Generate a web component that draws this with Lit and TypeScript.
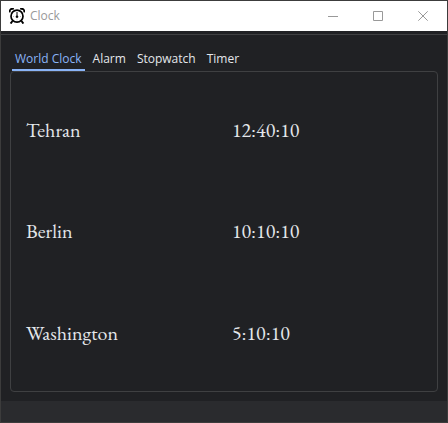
import { LitElement, html, css, svg } from "lit";
import { customElement, state } from "lit/decorators.js";

const TABS = ["World Clock", "Alarm", "Stopwatch", "Timer"];

const CLOCKS = [
  { city: "Tehran", time: "12:40:10" },
  { city: "Berlin", time: "10:10:10" },
  { city: "Washington", time: "5:10:10" },
];

const WINDOW_ACTIONS = [
  { name: "Minimize", shape: svg`<path d="M0 5.5H10" />` },
  { name: "Maximize", shape: svg`<path d="M.5 .5H9.5V9.5H.5Z" />` },
  { name: "Close", shape: svg`<path d="M.3 .3L9.7 9.7M9.7 .3L.3 9.7" />` },
];

@customElement("title-bar")
class TitleBar extends LitElement {
  static styles = css`
    :host {
      display: flex;
      align-items: center;
      height: 30px;
      padding-left: 8px;
      background: #ffffff;
      color: #999999;
      font: 12px/16px "Open Sans", "Noto Sans", sans-serif;
    }
    .logo {
      width: 16px;
      height: 16px;
      margin-right: 5px;
      fill: none;
      stroke: #000000;
    }
    .title {
      flex: 1;
    }
    .action {
      display: flex;
      align-items: center;
      justify-content: center;
      width: 45px;
      height: 30px;
      padding: 0;
      border: 0;
      background: none;
    }
    .actions {
      display: flex;
      margin-right: 2px;
    }
    .glyph {
      width: 10px;
      height: 10px;
      fill: none;
      stroke: #999999;
    }
  `;

  render() {
    return html`
      <svg class="logo" viewBox="0 0 16 16" aria-hidden="true">
        <circle cx="8" cy="8.2" r="6" stroke-width="1.7" />
        <path d="M.8 4.4C.3 1.8 2 .2 4.8 .9M15.2 4.4C15.7 1.8 14 .2 11.2 .9" stroke-width="1.8" />
        <path d="M3.5 13L1.6 15.6M12.5 13L14.4 15.6" stroke-width="1.9" />
        <path d="M8 4V8.6" stroke-width="1" />
        <circle cx="8" cy="8.8" r="1" fill="#000000" stroke-width=".6" />
        <path d="M4.3 8.5H5M11 8.5H11.7M8 11.6V12.2" stroke-width=".7" stroke="#777777" />
      </svg>
      <span class="title">Clock</span>
      <div class="actions">
        ${WINDOW_ACTIONS.map(
          (a) => html`<button class="action" aria-label=${a.name}>
            <svg class="glyph" viewBox="0 0 10 10">${a.shape}</svg>
          </button>`
        )}
      </div>
    `;
  }
}

@customElement("app-root")
class AppRoot extends LitElement {
  @state() private active = 0;

  static styles = css`
    :host {
      display: flex;
      flex-direction: column;
      box-sizing: border-box;
      min-height: 100vh;
      border: 1px solid #3c3c3c;
      background: #202124;
      color: #e4e7eb;
      font: 12px/16px "Open Sans", "Noto Sans", sans-serif;
    }
    .rule {
      height: 1px;
      margin-top: 3px;
      background: #3f4042;
    }
    .content {
      flex: 1;
      display: flex;
      flex-direction: column;
      padding: 13px 9px 9px;
    }
    .tabs {
      display: flex;
      padding-left: 2px;
    }
    .tab {
      height: 23px;
      padding: 1px 3px 0;
      margin-right: 5px;
      border: 0;
      border-bottom: 2px solid transparent;
      background: none;
      color: inherit;
      font: inherit;
      white-space: nowrap;
    }
    .tab.active {
      border-color: #8ab4f7;
      color: #8ab4f7;
    }
    .panel {
      flex: 1;
      display: flex;
      padding: 7px 15px;
      border: 1px solid #3f4042;
      border-radius: 4px;
    }
    .clocks {
      flex: 1;
      table-layout: fixed;
      border-collapse: collapse;
      font: 20px/24px "EB Garamond", "Liberation Serif", serif;
    }
    .city {
      width: 52%;
      padding: 0;
      font-weight: 400;
      text-align: left;
    }
    .time {
      padding: 0;
    }
    .status {
      height: 21px;
      background: #2a2b2e;
    }
  `;

  render() {
    return html`
      <title-bar></title-bar>
      <div class="rule"></div>
      <main class="content">
        <div class="tabs" role="tablist">
          ${TABS.map(
            (name, i) => html`<button
              class="tab ${i === this.active ? "active" : ""}"
              role="tab"
              aria-selected=${i === this.active}
              @click=${() => (this.active = i)}
            >${name}</button>`
          )}
        </div>
        <section class="panel" role="tabpanel">
          <table class="clocks">
            <tbody>
              ${CLOCKS.map(
                (c) => html`<tr>
                  <th class="city" scope="row">${c.city}</th>
                  <td class="time">${c.time}</td>
                </tr>`
              )}
            </tbody>
          </table>
        </section>
      </main>
      <footer class="status"></footer>
    `;
  }
}
